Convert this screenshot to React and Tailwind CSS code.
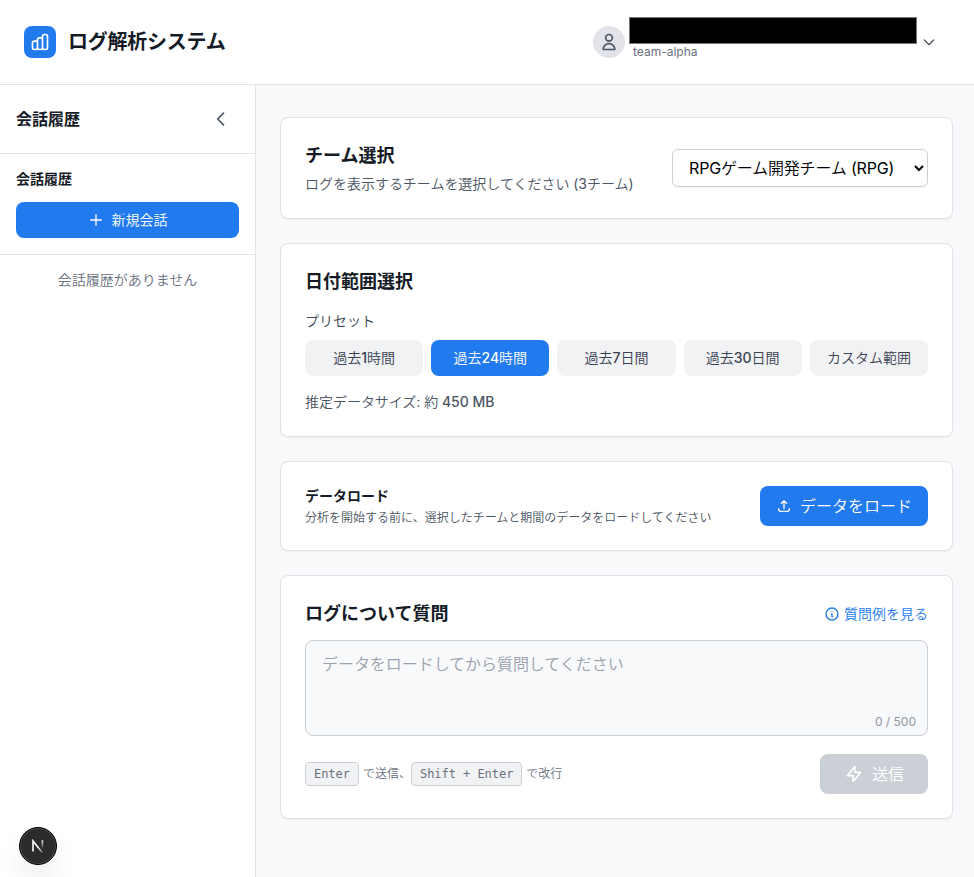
import { useState } from 'react'
import {
  HiOutlineChartBar,
  HiOutlineUser,
  HiOutlineChevronDown,
  HiOutlineChevronLeft,
  HiOutlinePlus,
  HiOutlineUpload,
  HiOutlineInformationCircle,
  HiOutlineLightningBolt,
} from 'react-icons/hi'

const presets = [
  { id: '1h', label: '過去1時間' },
  { id: '24h', label: '過去24時間' },
  { id: '7d', label: '過去7日間' },
  { id: '30d', label: '過去30日間' },
  { id: 'custom', label: 'カスタム範囲' },
]

const MAX_LENGTH = 500

function Card({ children }) {
  return (
    <section className="bg-white border border-[#e1e3e8] rounded-lg shadow-[0_1px_2px_rgba(0,0,0,0.05)] p-6">
      {children}
    </section>
  )
}

function Kbd({ children }) {
  return (
    <kbd className="h-6 px-2 flex items-center bg-[#f1f2f4] border border-[#cbcfd6] rounded font-['DejaVu_Sans_Mono',monospace] text-[12px] tracking-[-0.04px]">
      {children}
    </kbd>
  )
}

function Title({ children }) {
  return (
    <h2 className="font-[Inter,'Noto_Sans_CJK_JP',sans-serif] text-lg leading-7 font-semibold text-[#151b26]">
      {children}
    </h2>
  )
}

function Header() {
  return (
    <header className="h-[85px] shrink-0 bg-white border-b border-[#e1e3e8] flex items-center justify-between pl-6 pr-[37px]">
      <div className="flex items-center gap-3">
        <div className="w-8 h-8 rounded-lg bg-[#217aee] text-white flex items-center justify-center">
          <HiOutlineChartBar className="w-5 h-5" />
        </div>
        <h1 className="font-[Inter,'Noto_Sans_CJK_JP',sans-serif] text-xl tracking-[-0.25px] font-semibold text-[#151b26]">
          ログ解析システム
        </h1>
      </div>

      <button className="flex items-center gap-2">
        <div className="w-8 h-8 rounded-full bg-[#e1e3e8] text-[#4b5563] flex items-center justify-center">
          <HiOutlineUser className="w-5 h-5" />
        </div>
        <div className="relative w-[280px] pt-5 text-left">
          <span className="absolute -left-1 -top-[7px] w-[288px] h-[27px] bg-black border border-[#777]" />
          <p className="text-xs text-[#6a7180]">team-alpha</p>
        </div>
        <HiOutlineChevronDown className="w-4 h-4 text-[#4b5563]" />
      </button>
    </header>
  )
}

function Sidebar() {
  return (
    <aside className="w-64 shrink-0 bg-white border-r border-[#e1e3e8]">
      <div className="h-[69px] px-4 border-b border-[#e1e3e8] flex items-center justify-between">
        <h2 className="font-[Inter,'Noto_Sans_CJK_JP',sans-serif] text-base font-semibold text-[#151b26]">
          会話履歴
        </h2>
        <button className="p-2 text-[#4b5563]">
          <HiOutlineChevronLeft className="w-5 h-5" />
        </button>
      </div>

      <div className="pt-[15px] px-4 pb-4 border-b border-[#e1e3e8]">
        <h3 className="mb-[13px] font-[Inter,'Noto_Sans_CJK_JP',sans-serif] text-sm font-semibold text-[#151b26]">
          会話履歴
        </h3>
        <button className="w-full h-9 pb-px rounded-lg bg-[#217aee] text-white text-sm flex items-center justify-center gap-2">
          <HiOutlinePlus className="w-4 h-4" />
          新規会話
        </button>
      </div>

      <p className="px-4 pt-[15px] text-sm text-center text-[#6a7180]">会話履歴がありません</p>
    </aside>
  )
}

export default function App() {
  const [preset, setPreset] = useState('24h')
  const [question, setQuestion] = useState('')

  return (
    <div className="h-screen flex flex-col overflow-hidden bg-[#f8f9fb] font-[Inter,'Noto_Sans_CJK_JP_DemiLight','Noto_Sans_CJK_JP_Light','Noto_Sans_CJK_JP',sans-serif]">
      <Header />

      <div className="flex-1 flex min-h-0">
        <Sidebar />

        <main className="flex-1 min-w-0 pt-8 pl-6 pr-[21px] flex flex-col gap-6">
          <Card>
            <div className="flex items-center justify-between">
              <div>
                <Title>チーム選択</Title>
                <p className="mt-1 text-sm tracking-[-0.02px] text-[#4b5563]">
                  ログを表示するチームを選択してください (3チーム)
                </p>
              </div>
              <select className="w-64 h-[38px] px-3 bg-white text-black text-base tracking-[-0.17px] border border-[#cbcfd6] rounded-md shadow-[0_1px_2px_rgba(0,0,0,0.05)]">
                <option>RPGゲーム開発チーム (RPG)</option>
              </select>
            </div>
          </Card>

          <Card>
            <Title>日付範囲選択</Title>
            <p className="mt-[15px] mb-[9px] text-sm text-[#394252]">プリセット</p>
            <div className="grid grid-cols-5 gap-2">
              {presets.map(({ id, label }) => (
                <button
                  key={id}
                  onClick={() => setPreset(id)}
                  className={`h-9 rounded-lg text-sm font-medium ${
                    preset === id ? 'bg-[#217aee] text-white' : 'bg-[#f1f2f4] text-[#394252]'
                  }`}
                >
                  {label}
                </button>
              ))}
            </div>
            <p className="mt-4 text-sm tracking-[-0.03px] text-[#4b5563]">
              推定データサイズ: <span className="font-medium">約 450 MB</span>
            </p>
          </Card>

          <Card>
            <div className="h-10 flex items-center justify-between">
              <div>
                <h3 className="font-[Inter,'Noto_Sans_CJK_JP',sans-serif] text-sm font-semibold text-[#151b26]">
                  データロード
                </h3>
                <p className="mt-1 text-xs text-[#4b5563]">
                  分析を開始する前に、選択したチームと期間のデータをロードしてください
                </p>
              </div>
              <button className="w-[168px] h-10 rounded-lg bg-[#217aee] text-white flex items-center justify-center gap-2">
                <HiOutlineUpload className="w-4 h-4" />
                データをロード
              </button>
            </div>
          </Card>

          <Card>
            <div className="mb-3 flex items-center justify-between">
              <Title>ログについて質問</Title>
              <button className="flex items-center gap-1 text-sm text-[#217aee]">
                <HiOutlineInformationCircle className="w-4 h-4" />
                質問例を見る
              </button>
            </div>

            <div className="relative">
              <textarea
                value={question}
                onChange={(e) => setQuestion(e.target.value)}
                maxLength={MAX_LENGTH}
                placeholder="データをロードしてから質問してください"
                className="block w-full h-24 px-4 py-[11px] resize-none rounded-lg border border-[#cbcfd6] bg-[#f8f9fb] text-base tracking-[-0.05px] placeholder:text-[#9aa1ad]"
              />
              <span className="absolute right-3 bottom-1.5 text-xs text-[#9097a4]">
                {question.length} / {MAX_LENGTH}
              </span>
            </div>

            <div className="mt-[18px] flex items-center justify-between">
              <div className="flex items-center gap-1 text-xs text-[#6a7180]">
                <Kbd>Enter</Kbd>
                <span className="-mr-1">で送信、</span>
                <Kbd>Shift + Enter</Kbd>
                <span>で改行</span>
              </div>
              <button className="w-[108px] h-10 rounded-lg bg-[#cbcfd6] text-white flex items-center justify-center gap-2">
                <HiOutlineLightningBolt className="w-5 h-5" />
                送信
              </button>
            </div>
          </Card>
        </main>
      </div>

      {/* dev tools badge */}
      <div className="fixed left-[19px] bottom-3 w-[38px] h-[38px] rounded-full bg-[#2b2b2b] border border-black shadow-[inset_0_0_0_1px_#4a4a4a,0_16px_32px_-8px_rgba(0,0,0,0.2)] flex items-center justify-center">
        <svg width="14" height="14" viewBox="0 0 14 14" fill="none">
          <defs>
            <linearGradient id="diag" x1="7" y1="8" x2="12" y2="14" gradientUnits="userSpaceOnUse">
              <stop stopColor="#fff" />
              <stop offset="1" stopColor="#fff" stopOpacity="0.2" />
            </linearGradient>
            <linearGradient id="stem" x1="0" y1="1" x2="0" y2="10" gradientUnits="userSpaceOnUse">
              <stop stopColor="#fff" />
              <stop offset="1" stopColor="#fff" stopOpacity="0" />
            </linearGradient>
          </defs>
          <path d="M2 12.5V2L11.2 13.5" stroke="url(#diag)" strokeWidth="1.6" />
          <path d="M11.4 1.3V10" stroke="url(#stem)" strokeWidth="1.6" />
        </svg>
      </div>
    </div>
  )
}
